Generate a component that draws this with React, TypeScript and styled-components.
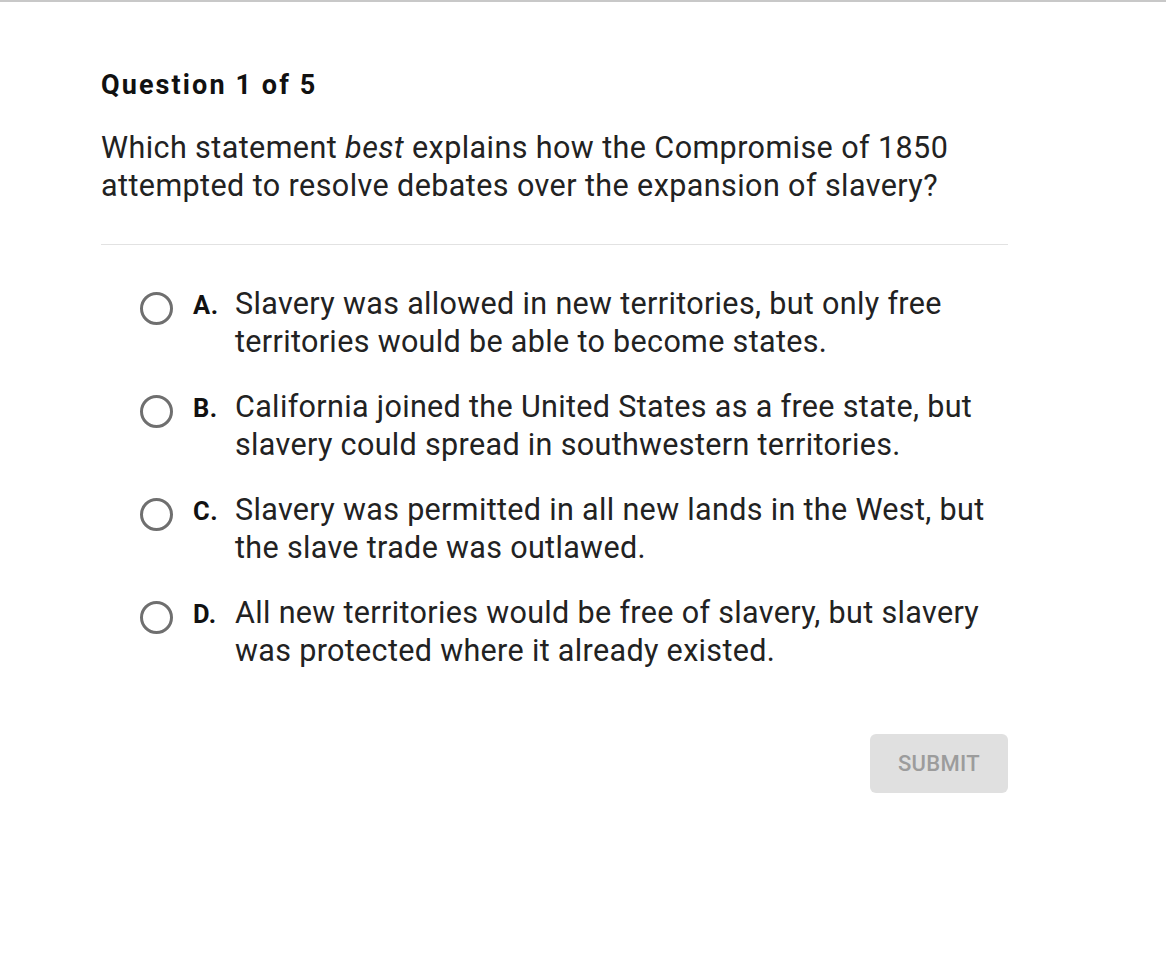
import React from "react";
import styled, { createGlobalStyle } from "styled-components";

const Global = createGlobalStyle`
  html, body { margin: 0; padding: 0; background: #fff; }
  body { font-family: Roboto, "Noto Sans", sans-serif; color: #222; }
`;

const Page = styled.div`
  min-height: 966px;
  border-top: 2px solid #c8c8c8;
  box-sizing: border-box;
  padding: 66px 158px 0 101px;
`;

const Title = styled.h1`
  margin: 0;
  font-size: 27px;
  font-weight: 700;
  letter-spacing: 2.1px;
  color: #111;
  line-height: 34px;
`;

const Prompt = styled.p`
  margin: 27px 0 0;
  font-size: 30.5px;
  line-height: 38px;
  letter-spacing: 0.42px;
  color: #222;
`;

const Emph = styled.em`
  font-style: italic;
`;

const Divider = styled.hr`
  margin: 39px 0 0;
  border: none;
  border-top: 1.5px solid #e2e2e2;
`;

const Options = styled.div`
  display: flex;
  flex-direction: column;
  gap: 27px;
  padding: 40px 0 0 39px;
`;

const Option = styled.label`
  display: flex;
  align-items: flex-start;
  cursor: pointer;
`;

const Radio = styled.span`
  flex: none;
  width: 33px;
  height: 33px;
  box-sizing: border-box;
  border: 3px solid #6f6f6f;
  border-radius: 50%;
  margin-top: 7px;
  margin-right: 20px;
`;

const Letter = styled.span`
  flex: none;
  width: 42px;
  font-size: 25.5px;
  font-weight: 700;
  line-height: 38px;
  padding-top: 1px;
  letter-spacing: 0.6px;
  color: #111;
`;

const OptionText = styled.span`
  font-size: 30.5px;
  line-height: 38px;
  letter-spacing: 0.34px;
  color: #222;
`;

const Footer = styled.div`
  display: flex;
  justify-content: flex-end;
  margin-top: 64px;
`;

const Submit = styled.button`
  width: 138px;
  height: 59px;
  border: none;
  border-radius: 6px;
  background: #e0e0e0;
  color: #9c9c9c;
  font-family: Roboto, sans-serif;
  font-size: 22px;
  font-weight: 500;
  letter-spacing: 0.3px;
`;

const options = [
  { l: "A.", t: "Slavery was allowed in new territories, but only free territories would be able to become states." },
  { l: "B.", t: "California joined the United States as a free state, but slavery could spread in southwestern territories." },
  { l: "C.", t: "Slavery was permitted in all new lands in the West, but the slave trade was outlawed." },
  { l: "D.", t: "All new territories would be free of slavery, but slavery was protected where it already existed." },
];

export default function App() {
  return (
    <>
      <Global />
      <Page>
        <Title>Question 1 of 5</Title>
        <Prompt>
          Which statement <Emph>best</Emph> explains how the Compromise of 1850 attempted to resolve debates over the expansion of slavery?
        </Prompt>
        <Divider />
        <Options>
          {options.map((o) => (
            <Option key={o.l}>
              <Radio />
              <Letter>{o.l}</Letter>
              <OptionText>{o.t}</OptionText>
            </Option>
          ))}
        </Options>
        <Footer>
          <Submit>SUBMIT</Submit>
        </Footer>
      </Page>
    </>
  );
}
